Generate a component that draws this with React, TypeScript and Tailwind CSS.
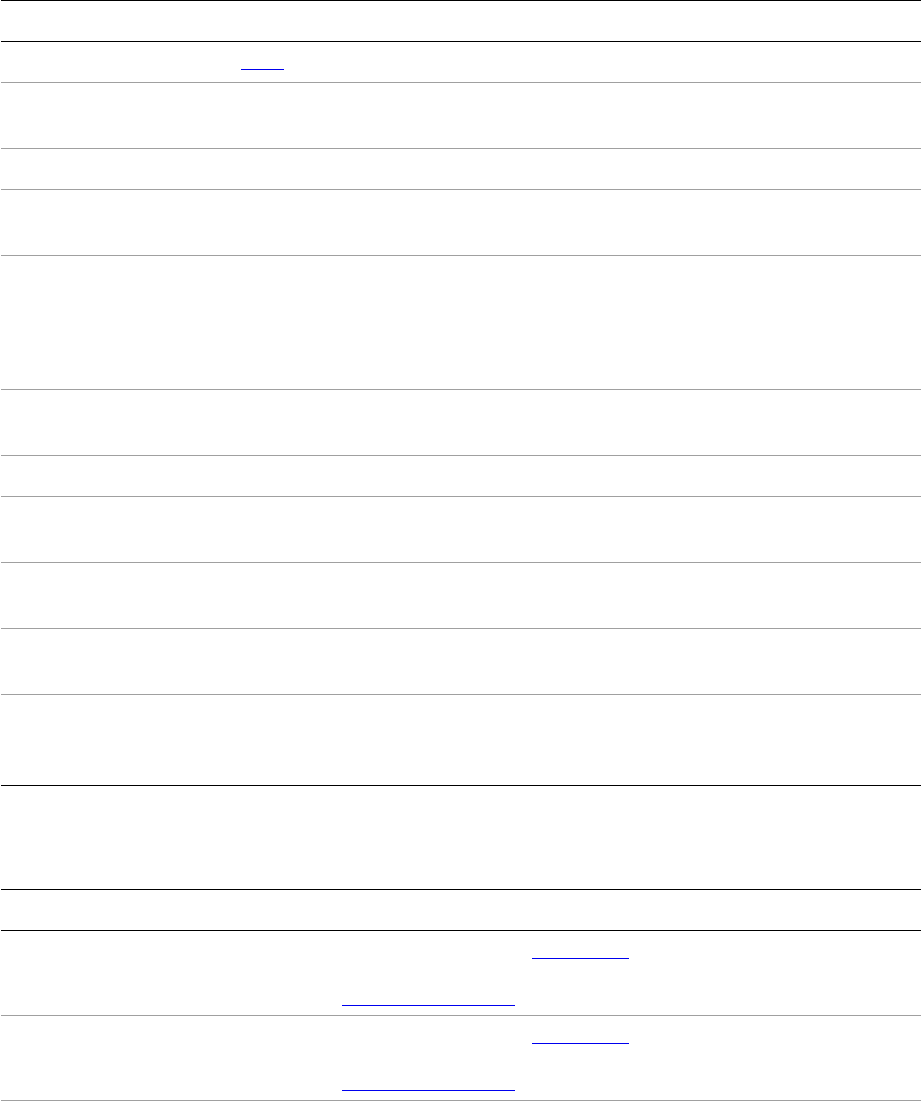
import React from 'react';

interface Row {
  h: string;
  line: string;
  label: string;
}

// first table: row heights include the bottom border
const rows: Row[] = [
  { h: 'h-[66px]', line: 'border-[#a0a0a0]', label: 'Item 2' },
  { h: 'h-[41px]', line: 'border-[#a0a0a0]', label: 'Item 3' },
  { h: 'h-[66px]', line: 'border-[#a0a0a0]', label: 'Item 4' },
  { h: 'h-[134px]', line: 'border-[#a0a0a0]', label: 'Item 5' },
  { h: 'h-[66px]', line: 'border-[#a0a0a0]', label: 'Item 6' },
  { h: 'h-[41px]', line: 'border-[#a0a0a0]', label: 'Item 7' },
  { h: 'h-[66px]', line: 'border-[#a0a0a0]', label: 'Item 8' },
  { h: 'h-[66px]', line: 'border-[#a0a0a0]', label: 'Item 9' },
  { h: 'h-[66px]', line: 'border-[#a0a0a0]', label: 'Item 10' },
  { h: 'h-[91px]', line: 'border-black', label: 'Item 11' },
];

function Link({ w, children }: { w: string; children: React.ReactNode }) {
  return (
    <a href="#" className={`block h-[20px] ${w} border-b border-[#0000ee] text-white leading-[19px] overflow-hidden whitespace-nowrap`}>
      {children}
    </a>
  );
}

function LinkRow({ label }: { label: string }) {
  return (
    <div className="grid grid-cols-[341px_1fr] h-[85px] border-b border-[#a0a0a0]">
      <div className="pt-2 pl-2 text-white">{label}</div>
      <div className="pt-2 text-white">
        <div className="flex">
          <span className="block w-[190px] h-[20px] leading-[19px]">See the page at</span>
          <Link w="w-[97px]">project page</Link>
        </div>
        <div className="mt-[27px]">
          <Link w="w-[173px]">download the release</Link>
        </div>
      </div>
    </div>
  );
}

export default function App() {
  return (
    <div className="min-h-screen bg-white text-base" style={{ fontFamily: '"Liberation Sans", Arial, sans-serif' }}>
      <div className="ml-[1px] w-[920px]">
        <div className="border-t border-black">
          <div className="grid grid-cols-[240px_1fr] h-[41px] border-b border-black text-white">
            <div className="pl-2 pt-2">Name</div>
            <div className="pt-2">Description</div>
          </div>
          <div className="grid grid-cols-[240px_1fr] h-[41px] border-b border-[#a0a0a0]">
            <div className="pl-2 pt-2 text-white">Item 1</div>
            <div className="pt-2">
              <Link w="w-[43px]">Home</Link>
            </div>
          </div>
          {rows.map((r) => (
            <div key={r.label} className={`grid grid-cols-[240px_1fr] ${r.h} border-b ${r.line}`}>
              <div className="pl-2 pt-2 text-white">{r.label}</div>
              <div className="pt-2 text-white">&nbsp;</div>
            </div>
          ))}
        </div>

        <div className="mt-[103px] border-t border-black">
          <div className="grid grid-cols-[341px_1fr] h-[41px] border-b border-black text-white">
            <div className="pl-2 pt-2">Version</div>
            <div className="pt-2">Links</div>
          </div>
          <LinkRow label="1.0" />
          <LinkRow label="0.9" />
        </div>
      </div>
    </div>
  );
}
